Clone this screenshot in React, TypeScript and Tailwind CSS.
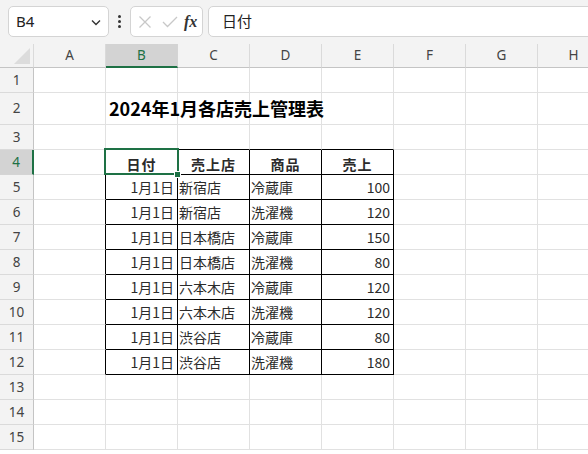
import React from "react";

const COLS = ["A", "B", "C", "D", "E", "F", "G", "H"];

type Cell = { t: string; align: "l" | "r" | "c"; bold?: boolean };

const data: [string, string, string, string][] = [
  ["1月1日", "新宿店", "冷蔵庫", "100"],
  ["1月1日", "新宿店", "洗濯機", "120"],
  ["1月1日", "日本橋店", "冷蔵庫", "150"],
  ["1月1日", "日本橋店", "洗濯機", "80"],
  ["1月1日", "六本木店", "冷蔵庫", "120"],
  ["1月1日", "六本木店", "洗濯機", "120"],
  ["1月1日", "渋谷店", "冷蔵庫", "80"],
  ["1月1日", "渋谷店", "洗濯機", "180"],
];

function cellFor(row: number, col: number): Cell | null {
  if (row === 4 && col >= 1 && col <= 4) {
    return { t: ["日付", "売上店", "商品", "売上"][col - 1], align: "c", bold: true };
  }
  if (row >= 5 && row <= 12 && col >= 1 && col <= 4) {
    const d = data[row - 5];
    const v = d[col - 1];
    return { t: v, align: col === 1 || col === 4 ? "r" : "l" };
  }
  return null;
}

const FONT = { fontFamily: '"Noto Sans CJK JP", "Noto Sans", sans-serif' };
const UI = { fontFamily: '"Noto Sans", "Open Sans", sans-serif' };

function GridRow({ row }: { row: number }) {
  const h = row === 2 ? "h-[32px]" : "h-[25px]";
  const selRow = row === 4;
  return (
    <div className={`flex ${h} shrink-0`}>
      <div
        className={
          selRow
            ? "w-[34px] shrink-0 bg-[#d3d3d3] border-r-2 border-r-[#1e7145] border-b border-b-[#d4d4d4] flex items-center justify-center text-[13.5px] text-[#1e7145]"
            : "w-[34px] shrink-0 bg-[#f3f3f3] border-r border-r-[#c4c4c4] border-b border-b-[#dadada] flex items-center justify-center text-[13.5px] text-[#444]"
        }
        style={UI}
      >
        {row}
      </div>
      {COLS.map((_, ci) => {
        const inTable = row >= 4 && row <= 12 && ci >= 1 && ci <= 4;
        const rightBlack = inTable || (ci === 0 && row >= 4 && row <= 12);
        const bottomBlack = inTable || (row === 3 && ci >= 1 && ci <= 4);
        const cls = [
          "relative w-[72px] shrink-0 flex items-center",
          rightBlack ? "border-r border-r-black" : "border-r border-r-[#e1e1e1]",
          bottomBlack ? "border-b border-b-black" : "border-b border-b-[#e1e1e1]",
        ].join(" ");
        const c = cellFor(row, ci);
        const isTitle = row === 2 && ci === 1;
        return (
          <div key={ci} className={cls}>
            {isTitle && (
              <div
                className="absolute left-[3px] top-0 bottom-0 flex items-center whitespace-nowrap text-[18px] font-bold text-black z-10"
                style={FONT}
              >
                2024年1月各店売上管理表
              </div>
            )}
            {c && (
              <div
                className={
                  c.align === "c"
                    ? "w-full text-center text-[14px] font-bold text-[#2b2b2b] pt-[5px] tracking-[1px]"
                    : c.align === "r"
                    ? "w-full text-right pr-[3px] text-[14px] text-[#2b2b2b]"
                    : "w-full text-left pl-[1px] text-[14px] text-[#2b2b2b] whitespace-nowrap"
                }
                style={FONT}
              >
                {c.t}
              </div>
            )}
            {row === 4 && ci === 1 && (
              <>
                <div className="absolute -left-[2px] -top-[2px] w-[75px] h-[27px] border-2 border-[#1e7145] z-20 pointer-events-none" />
                <div className="absolute left-[68px] top-[21px] w-[7px] h-[7px] bg-[#1e7145] border border-white z-30" />
              </>
            )}
          </div>
        );
      })}
    </div>
  );
}

export default function App() {
  const rows = Array.from({ length: 15 }, (_, i) => i + 1);
  return (
    <div className="w-[588px] h-[454px] overflow-hidden bg-white flex flex-col">
      {/* formula bar */}
      <div className="h-[44px] shrink-0 bg-[#f3f3f3] flex items-start pt-[6px]">
        <div className="ml-[8px] w-[101px] h-[31px] shrink-0 bg-white border border-[#d4d4d4] rounded-[5px] flex items-center justify-between pl-[7px] pr-[6px]">
          <span className="text-[15px] text-[#222]" style={UI}>
            B4
          </span>
          <svg width="12" height="12" viewBox="0 0 12 12">
            <path d="M2 4.5 L6 8.5 L10 4.5" fill="none" stroke="#333" strokeWidth="1.4" />
          </svg>
        </div>
        <div className="w-[21px] h-[31px] shrink-0 flex flex-col items-center justify-center gap-[2px]">
          <div className="w-[3px] h-[3px] bg-[#333] rounded-full" />
          <div className="w-[3px] h-[3px] bg-[#333] rounded-full" />
          <div className="w-[3px] h-[3px] bg-[#333] rounded-full" />
        </div>
        <div className="w-[73px] h-[31px] shrink-0 bg-white border border-[#d4d4d4] rounded-[5px] flex items-center pl-[6px]">
          <svg width="14" height="14" viewBox="0 0 14 14" className="ml-[1px]">
            <path d="M1.5 1.5 L12.5 12.5 M12.5 1.5 L1.5 12.5" stroke="#c8c8c8" strokeWidth="1.3" fill="none" />
          </svg>
          <svg width="16" height="14" viewBox="0 0 16 14" className="ml-[10px]">
            <path d="M1 7 L5.5 11.5 L15 2" stroke="#c8c8c8" strokeWidth="1.3" fill="none" />
          </svg>
          <span
            className="ml-[6px] text-[16px] italic font-bold text-[#333] leading-none"
            style={{ fontFamily: '"Liberation Serif", serif' }}
          >
            fx
          </span>
        </div>
        <div className="ml-[5px] w-[420px] h-[31px] shrink-0 bg-white border border-[#d4d4d4] rounded-[5px] flex items-center pl-[13px]">
          <span className="text-[15px] text-[#222]" style={FONT}>
            日付
          </span>
        </div>
      </div>
      {/* column header */}
      <div className="flex h-[24px] shrink-0">
        <div className="w-[34px] shrink-0 bg-[#f3f3f3] border-r border-r-[#dadada] border-b border-b-[#c4c4c4] relative overflow-hidden">
          <svg width="16" height="16" viewBox="0 0 16 16" className="absolute right-[3px] bottom-[3px]">
            <path d="M16 0 L16 16 L0 16 Z" fill="#dcdcdc" />
          </svg>
        </div>
        {COLS.map((c, i) =>
          i === 1 ? (
            <div
              key={c}
              className="w-[72px] shrink-0 bg-[#d3d3d3] border-r border-r-[#d4d4d4] border-b-2 border-b-[#1e7145] flex items-center justify-center text-[13.5px] text-[#1e7145]"
              style={UI}
            >
              {c}
            </div>
          ) : (
            <div
              key={c}
              className="w-[72px] shrink-0 bg-[#f3f3f3] border-r border-r-[#dadada] border-b border-b-[#c4c4c4] flex items-center justify-center text-[13.5px] text-[#444]"
              style={UI}
            >
              {c}
            </div>
          )
        )}
      </div>
      {rows.map((r) => (
        <GridRow key={r} row={r} />
      ))}
    </div>
  );
}
